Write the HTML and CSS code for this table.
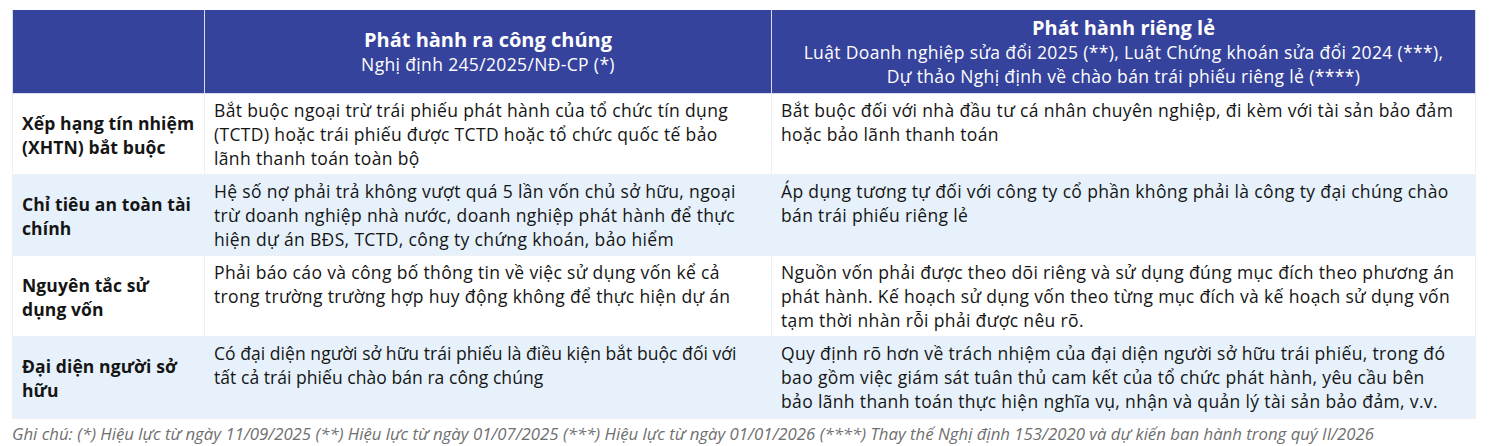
FILE: index.html
```html
<!DOCTYPE html>
<html lang="vi">
<head>
<meta charset="utf-8">
<link rel="stylesheet" href="styles.css">
</head>
<body>
<div class="wrap">
<table class="cmp">
  <colgroup><col class="c1"><col class="c2"><col class="c3"></colgroup>
  <thead>
    <tr>
      <th></th>
      <th><div class="h-title">Phát hành ra công chúng</div><div class="h-sub">Nghị định 245/2025/NĐ-CP (*)</div></th>
      <th><div class="h-title">Phát hành riêng lẻ</div><div class="h-sub">Luật Doanh nghiệp sửa đổi 2025 (**), Luật Chứng khoán sửa đổi 2024 (***),<br>Dự thảo Nghị định về chào bán trái phiếu riêng lẻ (****)</div></th>
    </tr>
  </thead>
  <tbody>
    <tr>
      <td class="lbl">Xếp hạng tín nhiệm<br>(XHTN) bắt buộc</td>
      <td>Bắt buộc ngoại trừ trái phiếu phát hành của tổ chức tín dụng (TCTD) hoặc trái phiếu được TCTD hoặc tổ chức quốc tế bảo lãnh thanh toán toàn bộ</td>
      <td>Bắt buộc đối với nhà đầu tư cá nhân chuyên nghiệp, đi kèm với tài sản bảo đảm hoặc bảo lãnh thanh toán</td>
    </tr>
    <tr class="alt">
      <td class="lbl">Chỉ tiêu an toàn tài<br>chính</td>
      <td>Hệ số nợ phải trả không vượt quá 5 lần vốn chủ sở hữu, ngoại trừ doanh nghiệp nhà nước, doanh nghiệp phát hành để thực hiện dự án BĐS, TCTD, công ty chứng khoán, bảo hiểm</td>
      <td>Áp dụng tương tự đối với công ty cổ phần không phải là công ty đại chúng chào bán trái phiếu riêng lẻ</td>
    </tr>
    <tr>
      <td class="lbl">Nguyên tắc sử<br>dụng vốn</td>
      <td>Phải báo cáo và công bố thông tin về việc sử dụng vốn kể cả trong trường trường hợp huy động không để thực hiện dự án</td>
      <td>Nguồn vốn phải được theo dõi riêng và sử dụng đúng mục đích theo phương án phát hành. Kế hoạch sử dụng vốn theo từng mục đích và kế hoạch sử dụng vốn tạm thời nhàn rỗi phải được nêu rõ.</td>
    </tr>
    <tr class="alt last">
      <td class="lbl">Đại diện người sở<br>hữu</td>
      <td class="tight">Có đại diện người sở hữu trái phiếu là điều kiện bắt buộc đối với tất cả trái phiếu chào bán ra công chúng</td>
      <td>Quy định rõ hơn về trách nhiệm của đại diện người sở hữu trái phiếu, trong đó bao gồm việc giám sát tuân thủ cam kết của tổ chức phát hành, yêu cầu bên bảo lãnh thanh toán thực hiện nghĩa vụ, nhận và quản lý tài sản bảo đảm, v.v.</td>
    </tr>
  </tbody>
</table>
<p class="note">Ghi chú: (*) Hiệu lực từ ngày 11/09/2025 (**) Hiệu lực từ ngày 01/07/2025 (***) Hiệu lực từ ngày 01/01/2026 (****) Thay thế Nghị định 153/2020 và dự kiến ban hành trong quý II/2026</p>
</div>
</body>
</html>
```
FILE: styles.css
```css
html, body {
  margin: 0;
  padding: 0;
  background: #ffffff;
}
body {
  font-family: "Open Sans", "Noto Sans", sans-serif;
  color: #151515;
}
.wrap {
  padding: 10px 25px 0 12px;
}
.cmp {
  width: 1463px;
  border-collapse: collapse;
  table-layout: fixed;
}
.c1 { width: 192px; }
.c2 { width: 567px; }
.c3 { width: 704px; }
.cmp th {
  background: #35439c;
  color: #ffffff;
  height: 83px;
  padding: 0 6px;
  text-align: center;
  vertical-align: middle;
  border: 1px solid #d9dcef;
  border-top: none;
  font-weight: normal;
}
.h-title {
  font-weight: 700;
  font-size: 20px;
  line-height: 24px;
}
.h-sub {
  font-size: 17.5px;
  letter-spacing: 0.35px;
  line-height: 24px;
}
.cmp td {
  font-size: 17.5px;
  letter-spacing: 0.35px;
  line-height: 24px;
  padding: 4px 16px 3px 9px;
  vertical-align: top;
  height: 73px;
  box-sizing: content-box;
  border: 1px solid #edf0f4;
  background: #ffffff;
  overflow: hidden;
}
.cmp tr.last td {
  height: 74px;
}
.cmp tr.alt td {
  background: #e6f1fb;
}
.cmp td.lbl {
  font-weight: 700;
  font-size: 17.5px;
  letter-spacing: 0.1px;
  padding-right: 3px;
  vertical-align: middle;
  white-space: nowrap;
}
.cmp td.tight {
  letter-spacing: 0.05px;
}
.note {
  margin: 5px 0 0 0;
  font-style: italic;
  font-size: 16.8px;
  line-height: 20px;
  color: #6f6f6f;
  white-space: nowrap;
}
```
